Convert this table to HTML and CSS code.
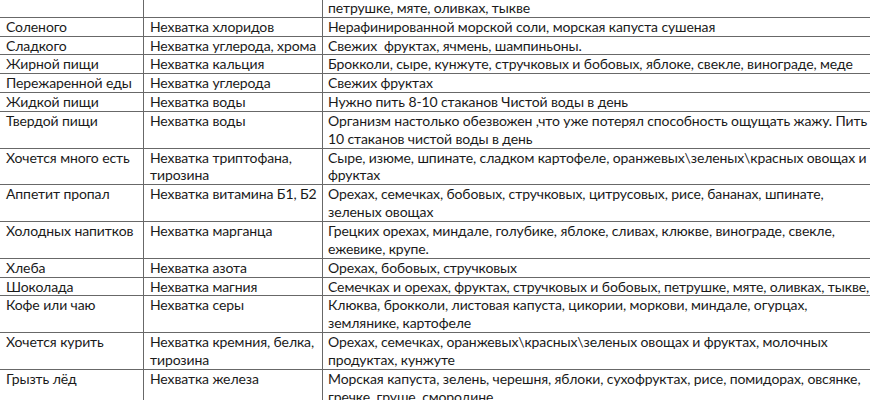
FILE: index.html
```html
<!DOCTYPE html>
<html lang="ru">
<head>
<meta charset="utf-8">
<link rel="stylesheet" href="styles.css">
</head>
<body>
<table class="needs">
  <colgroup>
    <col class="c-crave">
    <col class="c-lack">
    <col class="c-food">
  </colgroup>
  <tbody>
    <tr class="two"><td></td><td></td><td>Семечках и орехах, фруктах, стручковых и бобовых,<br>петрушке, мяте, оливках, тыкве</td></tr>
    <tr><td>Соленого</td><td>Нехватка хлоридов</td><td>Нерафинированной морской соли, морская капуста сушеная</td></tr>
    <tr><td>Сладкого</td><td>Нехватка углерода, хрома</td><td>Свежих&nbsp; фруктах, ячмень, шампиньоны.</td></tr>
    <tr><td>Жирной пищи</td><td>Нехватка кальция</td><td>Брокколи, сыре, кунжуте, стручковых и бобовых, яблоке, свекле, винограде, меде</td></tr>
    <tr><td>Пережаренной еды</td><td>Нехватка углерода</td><td>Свежих фруктах</td></tr>
    <tr><td>Жидкой пищи</td><td>Нехватка воды</td><td>Нужно пить 8-10 стаканов Чистой воды в день</td></tr>
    <tr><td>Твердой пищи</td><td>Нехватка воды</td><td>Организм настолько обезвожен ,что уже потерял способность ощущать жажу. Пить<br>10 стаканов чистой воды в день</td></tr>
    <tr><td>Хочется много есть</td><td>Нехватка триптофана,<br>тирозина</td><td>Сыре, изюме, шпинате, сладком картофеле, оранжевых\зеленых\красных овощах и<br>фруктах</td></tr>
    <tr><td>Аппетит пропал</td><td>Нехватка витамина Б1, Б2</td><td>Орехах, семечках, бобовых, стручковых, цитрусовых, рисе, бананах, шпинате,<br>зеленых овощах</td></tr>
    <tr><td>Холодных напитков</td><td>Нехватка марганца</td><td>Грецких орехах, миндале, голубике, яблоке, сливах, клюкве, винограде, свекле,<br>ежевике, крупе.</td></tr>
    <tr><td>Хлеба</td><td>Нехватка азота</td><td>Орехах, бобовых, стручковых</td></tr>
    <tr><td>Шоколада</td><td>Нехватка магния</td><td>Семечках и орехах, фруктах, стручковых и бобовых, петрушке, мяте, оливках, тыкве,</td></tr>
    <tr><td>Кофе или чаю</td><td>Нехватка серы</td><td>Клюква, брокколи, листовая капуста, цикории, моркови, миндале, огурцах,<br>землянике, картофеле</td></tr>
    <tr><td>Хочется курить</td><td>Нехватка кремния, белка,<br>тирозина</td><td>Орехах, семечках, оранжевых\красных\зеленых овощах и фруктах, молочных<br>продуктах, кунжуте</td></tr>
    <tr><td>Грызть лёд</td><td>Нехватка железа</td><td>Морская капуста, зелень, черешня, яблоки, сухофруктах, рисе, помидорах, овсянке,<br>гречке, груше, смородине</td></tr>
  </tbody>
</table>
</body>
</html>
```

FILE: styles.css
```css
html, body {
  margin: 0;
  padding: 0;
  background: #ffffff;
  overflow: hidden;
}
body {
  width: 870px;
  height: 400px;
}
.needs {
  border-collapse: collapse;
  table-layout: fixed;
  width: 920px;
  margin: -20px 0 0 -4px;
  font-family: "Lato", "Liberation Sans", sans-serif;
  font-size: 14px;
  letter-spacing: -0.1px;
  color: #1a1a1a;
}
.c-crave { width: 147px; }
.c-lack { width: 179px; }
.c-food { width: 594px; }
.needs td {
  border: 1px solid #686868;
  padding: 0 4px 0 9px;
  line-height: 17.85px;
  vertical-align: top;
  white-space: nowrap;
  overflow: hidden;
}
.needs td + td {
  padding-left: 6px;
}
.needs td + td + td {
  padding-left: 5px;
}
```
